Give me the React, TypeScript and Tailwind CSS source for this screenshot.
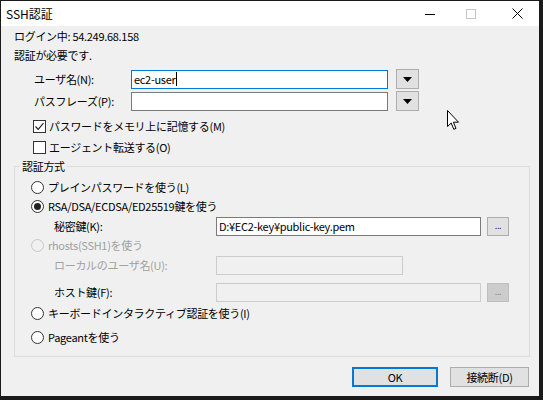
import React from 'react';

const font = { fontFamily: '"Noto Sans CJK JP", "Noto Sans", sans-serif' };

function DropButton() {
  return (
    <div className="w-[23px] h-[20px] bg-[#e1e1e1] border border-[#adadad] flex items-center justify-center">
      <svg width="9" height="5" viewBox="0 0 9 5">
        <path d="M0 0 H9 L4.5 5 Z" fill="#000" />
      </svg>
    </div>
  );
}

function Checkbox({ checked, label }: { checked?: boolean; label: string }) {
  return (
    <div className="flex items-center h-[16px] leading-[16px]">
      <div className="w-[13px] h-[13px] border border-[#333] bg-white flex items-center justify-center">
        {checked && (
          <svg width="11" height="11" viewBox="0 0 11 11">
            <path d="M1.5 5.5 L4.2 8.3 L9.5 2.2" stroke="#222" strokeWidth="1.2" fill="none" />
          </svg>
        )}
      </div>
      <span className="ml-[3px]">{label}</span>
    </div>
  );
}

function Radio({ checked, disabled, label }: { checked?: boolean; disabled?: boolean; label: string }) {
  return (
    <div className={`flex items-center h-[16px] leading-[16px] ${disabled ? 'text-[#a0a0a0]' : ''}`}>
      <div
        className={`w-[13px] h-[13px] rounded-full border flex items-center justify-center ${
          disabled ? 'border-[#c8c8c8] bg-[#f0f0f0]' : 'border-[#333] bg-white'
        }`}
      >
        {checked && <div className="w-[7px] h-[7px] rounded-full bg-[#222]" />}
      </div>
      <span className="ml-[4px]">{label}</span>
    </div>
  );
}

function DotsButton({ disabled }: { disabled?: boolean }) {
  return (
    <div
      className={`w-[22px] h-[19px] ml-[6px] border flex items-center justify-center text-[9px] leading-none pb-[3px] ${
        disabled ? 'bg-[#cccccc] border-[#bfbfbf] text-[#8a8a8a]' : 'bg-[#e1e1e1] border-[#adadad] text-[#333]'
      }`}
    >
      ...
    </div>
  );
}

export default function App() {
  return (
    <div className="w-[543px] h-[400px] bg-[#1a1a1a] pt-px pl-px text-[11px] tracking-[-0.3px] text-black" style={font}>
      <div className="relative w-[538px] h-[395px] flex flex-col bg-[#f0f0f0]">
        {/* title bar */}
        <div className="h-[25px] bg-white flex items-center pl-[5px]">
          <span className="leading-none text-[12px] tracking-normal">SSH認証</span>
          <div className="ml-auto flex items-center h-full">
            <svg className="mr-[31px]" width="10" height="10" viewBox="0 0 10 10">
              <path d="M0 5.5 H10" stroke="#000" strokeWidth="1" />
            </svg>
            <svg className="mr-[36px]" width="10" height="10" viewBox="0 0 10 10">
              <rect x="0.5" y="0.5" width="9" height="9" fill="none" stroke="#c6c6c6" />
            </svg>
            <svg className="mr-[16px]" width="11" height="11" viewBox="0 0 11 11">
              <path d="M0.5 0.5 L10.5 10.5 M10.5 0.5 L0.5 10.5" stroke="#000" strokeWidth="1" />
            </svg>
          </div>
        </div>

        {/* body */}
        <div className="flex-1 flex flex-col pl-[13px] pt-[2px]">
          <div className="h-[16px] leading-[16px]">ログイン中: 54.249.68.158</div>
          <div className="h-[16px] leading-[16px] mt-[3px]">認証が必要です.</div>

          <div className="flex items-center h-[20px] mt-[6px] pl-[20px]">
            <span className="w-[97px]">ユーザ名(N):</span>
            <div className="w-[257px] h-[19px] bg-white border border-[#0078d7] flex items-center pl-[2px] leading-none">
              ec2-user<span className="w-px h-[14px] bg-black ml-px" />
            </div>
            <div className="ml-[8px]">
              <DropButton />
            </div>
          </div>
          <div className="flex items-center h-[20px] mt-[2px] pl-[20px]">
            <span className="w-[97px]">パスフレーズ(P):</span>
            <div className="w-[257px] h-[19px] bg-white border border-[#7a7a7a]" />
            <div className="ml-[8px]">
              <DropButton />
            </div>
          </div>

          <div className="mt-[7px] pl-[19px]">
            <Checkbox checked label="パスワードをメモリ上に記憶する(M)" />
          </div>
          <div className="mt-[5px] pl-[19px]">
            <Checkbox label="エージェント転送する(O)" />
          </div>

          {/* 認証方式 group */}
          <div className="w-[516px] border border-[#dcdcdc] mt-[11px] pb-[11px]">
            <div className="-mt-[9px] ml-[5px] px-[2px] w-fit h-[16px] leading-[16px] bg-[#f0f0f0]">認証方式</div>
            <div className="pl-[16px]">
              <div className="mt-[5px]">
                <Radio label="プレインパスワードを使う(L)" />
              </div>
              <div className="mt-[3px]">
                <Radio checked label="RSA/DSA/ECDSA/ED25519鍵を使う" />
              </div>
              <div className="flex items-center mt-[3px] pl-[23px]">
                <span className="w-[162px]">秘密鍵(K):</span>
                <div className="w-[265px] h-[19px] bg-white border border-[#7a7a7a] flex items-center pl-[2px] leading-none">
                  D:¥EC2-key¥public-key.pem
                </div>
                <DotsButton />
              </div>
              <div className="mt-[1px]">
                <Radio disabled label="rhosts(SSH1)を使う" />
              </div>
              <div className="flex items-center mt-[3px] pl-[23px]">
                <span className="w-[162px] text-[#a0a0a0]">ローカルのユーザ名(U):</span>
                <div className="w-[187px] h-[19px] bg-[#f0f0f0] border border-[#cccccc]" />
              </div>
              <div className="flex items-center mt-[8px] pl-[23px]">
                <span className="w-[162px]">ホスト鍵(F):</span>
                <div className="w-[265px] h-[19px] bg-[#f0f0f0] border border-[#cccccc]" />
                <DotsButton disabled />
              </div>
              <div className="mt-[3px]">
                <Radio label="キーボードインタラクティブ認証を使う(I)" />
              </div>
              <div className="mt-[8px]">
                <Radio label="Pageantを使う" />
              </div>
            </div>
          </div>

          <div className="flex mt-[10px] pl-[338px]">
            <div className="w-[86px] h-[20px] bg-[#e1e1e1] border-2 border-[#0078d7] flex items-center justify-center leading-none">
              OK
            </div>
            <div className="w-[79px] h-[20px] ml-[12px] bg-[#e1e1e1] border border-[#adadad] flex items-center justify-center leading-none">
              接続断(D)
            </div>
          </div>
        </div>

        {/* mouse pointer */}
        <svg className="absolute left-[446px] top-[109px]" width="13" height="21" viewBox="0 0 13 21">
          <path
            d="M0.5 0.5 L0.5 16.5 L4.2 13 L6.8 19.3 L9 18.4 L6.4 12.2 L11.5 12.2 Z"
            fill="#fff"
            stroke="#000"
            strokeWidth="1"
            strokeLinejoin="round"
          />
        </svg>
      </div>
    </div>
  );
}
